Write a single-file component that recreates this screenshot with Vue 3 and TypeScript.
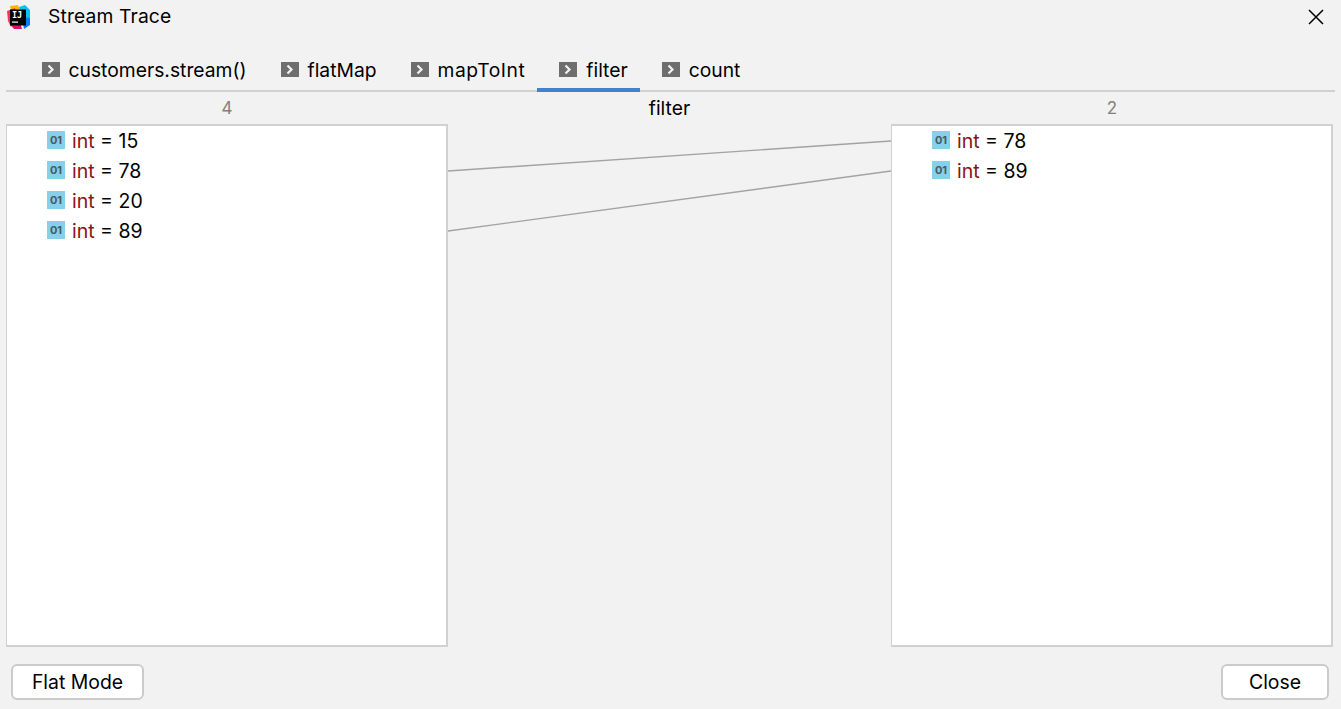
<script setup lang="ts">
const tabs = [
  { label: 'customers.stream()', active: false, wide: false },
  { label: 'flatMap', active: false, wide: false },
  { label: 'mapToInt', active: false, wide: true },
  { label: 'filter', active: true, wide: false },
  { label: 'count', active: false, wide: false },
]
const leftValues = [15, 78, 20, 89]
const rightValues = [78, 89]
</script>

<template>
  <div class="dialog">
    <header class="title-bar">
      <svg class="logo" width="24" height="24" viewBox="0 0 24 24">
        <path d="M3 1 L11 0 L13 6 L5 10 Z" fill="#fdb60d" />
        <path d="M0 6 L8 3 L10 14 L4 22 L1 16 Z" fill="#fe315d" />
        <path d="M3 19 L12 14 L15 24 L7 24 Z" fill="#dd1265" />
        <path d="M12 2 L18 0 L23 5 L23 15 L14 12 Z" fill="#07c3f2" />
        <path d="M15 12 L23 13 L23 20 L17 24 Z" fill="#087cfa" />
        <rect x="3" y="4.5" width="16" height="16" fill="#000" />
        <text x="5" y="13" class="logo-text">IJ</text>
        <rect x="5" y="16.5" width="6" height="1.2" fill="#fff" />
      </svg>
      <span class="title">Stream Trace</span>
      <svg class="close-x" width="16" height="16" viewBox="0 0 16 16">
        <path d="M1 1 L15 15 M15 1 L1 15" stroke="#000" stroke-width="1.5" fill="none" />
      </svg>
    </header>

    <nav class="tabs">
      <div v-for="tab in tabs" :key="tab.label" class="tab" :class="{ active: tab.active }">
        <svg class="tab-icon" width="18" height="15" viewBox="0 0 18 15">
          <rect width="18" height="15" fill="#6e6e6e" />
          <path d="M6.5 3.5 L10.5 7.5 L6.5 11.5" stroke="#f2f2f2" stroke-width="2.2" fill="none" />
        </svg>
        <span :class="{ wide: tab.wide }">{{ tab.label }}</span>
      </div>
    </nav>

    <main class="trace">
      <div class="count">4</div>
      <div class="center-name">filter</div>
      <div class="count">2</div>

      <section class="list">
        <div v-for="(v, i) in leftValues" :key="i" class="row">
          <span class="badge">01</span>
          <span class="val"><span class="kw">int</span> = {{ v }}</span>
        </div>
      </section>
      <div class="links">
        <svg class="links-svg" width="443" height="522" viewBox="0 0 443 522">
          <line x1="0" y1="47" x2="443" y2="17" stroke="#a3a3a3" stroke-width="1.4" />
          <line x1="0" y1="107" x2="443" y2="47" stroke="#a3a3a3" stroke-width="1.4" />
        </svg>
      </div>
      <section class="list">
        <div v-for="(v, i) in rightValues" :key="i" class="row">
          <span class="badge">01</span>
          <span class="val"><span class="kw">int</span> = {{ v }}</span>
        </div>
      </section>
    </main>

    <footer class="footer">
      <button class="btn flat">Flat Mode</button>
      <button class="btn close">Close</button>
    </footer>
  </div>
</template>

<style>
html, body { margin: 0; background: #f2f2f2; }
</style>

<style scoped>
.dialog {
  width: 1341px;
  height: 709px;
  background: #f2f2f2;
  color: #000;
  font-family: Inter, "Liberation Sans", sans-serif;
  font-size: 19.3px;
  display: flex;
  flex-direction: column;
  overflow: hidden;
}
.title-bar {
  height: 33px;
  flex: none;
  display: flex;
  align-items: center;
  padding: 0 17px 2px 7px;
  box-sizing: border-box;
}
.logo { flex: none; position: relative; top: 1px; }
.logo-text {
  font-family: "DejaVu Sans Mono", monospace;
  font-size: 8.5px;
  font-weight: 700;
  fill: #fff;
}
.title { margin-left: 17px; flex: 1; letter-spacing: 0.12px; }
.close-x { position: relative; top: 1px; }
.tabs {
  height: 59px;
  flex: none;
  margin: 0 6px;
  padding-left: 13.5px;
  box-sizing: border-box;
  display: flex;
  align-items: stretch;
  border-bottom: 2px solid #d1d1d1;
}
.tab {
  display: flex;
  align-items: center;
  gap: 9px;
  padding: 14px 12px 0 22px;
  height: 59px;
  box-sizing: border-box;
}
.tab.active { box-shadow: inset 0 -4px 0 #4083c9; }
.tab-icon { flex: none; }
.wide { letter-spacing: 0.55px; }
.trace {
  flex: none;
  display: grid;
  grid-template-columns: 442px 443px 442px;
  grid-template-rows: 32px 523px;
  padding-left: 6px;
}
.count, .center-name {
  display: flex;
  align-items: center;
  justify-content: center;
}
.count { color: #857f7a; font-size: 17px; }
.center-name { font-size: 19.3px; }
.list {
  background: #fff;
  border: 1px solid #d1d1d1;
  border-width: 2px 2px 2px 1px;
  box-sizing: border-box;
}
.row {
  height: 30px;
  display: flex;
  align-items: center;
  padding-left: 40px;
}
.badge {
  width: 18px;
  height: 18px;
  background: #86d0ea;
  color: #4a5a62;
  font-size: 11px;
  font-weight: 700;
  display: flex;
  align-items: center;
  justify-content: center;
  margin-right: 7px;
  position: relative;
  top: -1px;
}
.val { font-size: 19.5px; }
.kw { color: #871414; }
.links { position: relative; }
.links-svg { position: absolute; inset: 0; }
.footer {
  flex: 1;
  display: flex;
  justify-content: space-between;
  align-items: flex-start;
  padding: 17px 12px 0 11px;
}
.btn {
  height: 36px;
  background: #fff;
  border: 2px solid #cbcbcb;
  border-radius: 6px;
  font: inherit;
  font-size: 19.4px;
  color: #000;
  padding: 0;
}
.flat { width: 133px; }
.close { width: 108px; }
</style>
